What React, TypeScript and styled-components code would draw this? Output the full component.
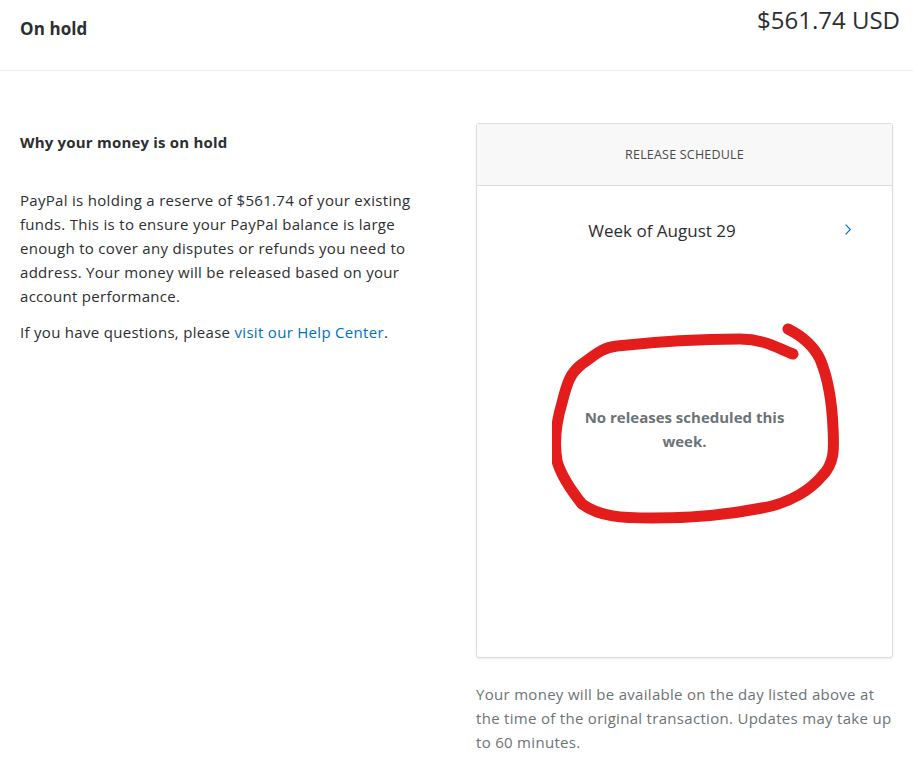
import styled, { createGlobalStyle } from 'styled-components';

const Globalstyles = createGlobalStyle`
  body {
    margin: 0;
    background: #fff;
    font-family: "Open Sans", "Noto Sans", sans-serif;
    color: #2c2e2f;
  }
`;

const App = () => {
  return (
    <Page>
      <Globalstyles />
      <Header>
        <Title>On hold</Title>
        <Amount>$561.74 USD</Amount>
      </Header>

      <Content>
        <Info>
          <Subhead>Why your money is on hold</Subhead>
          <Text>
            PayPal is holding a reserve of $561.74 of your existing funds. This is to ensure your
            PayPal balance is large enough to cover any disputes or refunds you need to address.
            Your money will be released based on your account performance.
          </Text>
          <Text>
            If you have questions, please <HelpLink href="#">visit our Help Center</HelpLink>.
          </Text>
        </Info>

        <Side>
          <Card>
            <CardHead>Release Schedule</CardHead>
            <WeekRow>
              <span>Week of August 29</span>
              <Chevron viewBox="0 0 10 16">
                <path d="M2 2 L8 8 L2 14" />
              </Chevron>
            </WeekRow>
            <Empty>
              <EmptyText>No releases scheduled this week.</EmptyText>
              <Scribble viewBox="0 0 300 210">
                <path d="M241 31 C225 25 212 16 188 16 C150 16 110 18 65 23 C48 25 42 33 30 41 C18 50 15 60 10 80 C4 100 2 120 5 138 C9 152 18 166 30 181 C48 194 70 195 100 195 C135 195 175 192 210 185 C240 180 260 165 270 153 C283 140 282 125 281 105 C280 80 276 55 268 36 C260 20 248 12 236 6" />
              </Scribble>
            </Empty>
          </Card>
          <Note>
            Your money will be available on the day listed above at the time of the original
            transaction. Updates may take up to 60 minutes.
          </Note>
        </Side>
      </Content>
    </Page>
  );
};

export default App;

const Page = styled.div`
  width: 913px;
  min-height: 768px;
`;

const Header = styled.header`
  height: 71px;
  display: flex;
  justify-content: space-between;
  align-items: flex-start;
  padding: 0 13px 0 20px;
  border-bottom: 1px solid #eeeff0;
  box-sizing: border-box;
`;

const Title = styled.h1`
  margin: 17px 0 0;
  font-size: 17px;
  font-weight: 700;
  letter-spacing: 0.1px;
  color: #2c2e2f;
`;

const Amount = styled.div`
  margin-top: 3px;
  font-size: 24px;
  color: #2c2e2f;
`;

const Content = styled.main`
  display: grid;
  grid-template-columns: 405px 417px;
  justify-content: space-between;
  padding: 52px 20px 0 20px;
`;

const Info = styled.section`
  padding-top: 7px;
`;

const Subhead = styled.h2`
  margin: 0 0 34px;
  font-size: 15px;
  font-weight: 700;
  line-height: 24px;
  letter-spacing: 0.2px;
`;

const Text = styled.p`
  margin: 0 0 12px;
  font-size: 15px;
  line-height: 24px;
  letter-spacing: 0.3px;
  color: #2c2e2f;
`;

const HelpLink = styled.a`
  color: #0070ba;
  text-decoration: none;
`;

const Side = styled.section`
  display: flex;
  flex-direction: column;
`;

const Card = styled.div`
  height: 535px;
  display: flex;
  flex-direction: column;
  border: 1px solid #dcdcdc;
  border-radius: 3px;
  box-shadow: 0 1px 2px rgba(0, 0, 0, 0.08);
  box-sizing: border-box;
`;

const CardHead = styled.div`
  height: 61px;
  display: flex;
  align-items: center;
  justify-content: center;
  background: #f8f8f8;
  border-bottom: 1px solid #dcdcdc;
  font-size: 12.5px;
  letter-spacing: 0.2px;
  text-transform: uppercase;
  color: #4a4a4a;
`;

const WeekRow = styled.div`
  position: relative;
  height: 88px;
  display: flex;
  align-items: center;
  justify-content: center;
  padding-right: 45px;
  font-size: 17px;
  color: #2c2e2f;
`;

const Chevron = styled.svg`
  position: absolute;
  right: 40px;
  top: 37px;
  width: 8px;
  height: 13px;
  fill: none;
  stroke: #0070ba;
  stroke-width: 1.4;
`;

const Empty = styled.div`
  position: relative;
  display: flex;
  justify-content: center;
  padding-top: 131px;
`;

const EmptyText = styled.p`
  margin: 0;
  width: 210px;
  text-align: center;
  font-size: 15px;
  font-weight: 700;
  line-height: 24px;
  color: #6c7378;
`;

const Scribble = styled.svg`
  position: absolute;
  left: 75px;
  top: 49px;
  width: 300px;
  height: 210px;
  fill: none;
  stroke: #e31c1c;
  stroke-width: 11;
  stroke-linecap: round;
  stroke-linejoin: round;
`;

const Note = styled.p`
  margin: 24px 0 0;
  font-size: 15px;
  line-height: 24px;
  letter-spacing: 0.3px;
  color: #6c7378;
`;
